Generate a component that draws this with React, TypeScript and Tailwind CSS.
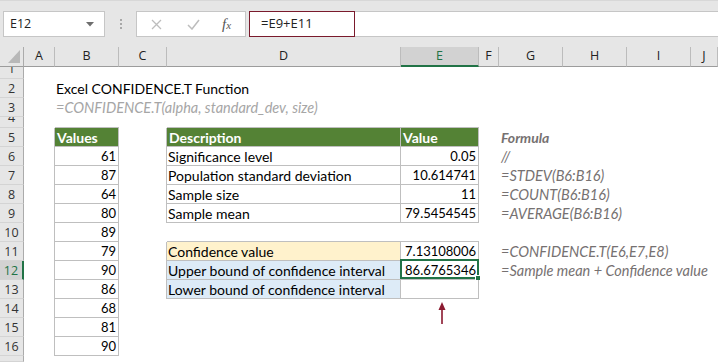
import React from "react";

type Tbl = { r1: number; r2: number; c1: number; c2: number };
const tables: Tbl[] = [
  { r1: 5, r2: 16, c1: 1, c2: 1 },
  { r1: 5, r2: 9, c1: 3, c2: 4 },
  { r1: 11, r2: 13, c1: 3, c2: 4 },
];
const inT = (r: number, c: number) =>
  tables.some((t) => r >= t.r1 && r <= t.r2 && c >= t.c1 && c <= t.c2);

const COLS = ["A", "B", "C", "D", "E", "F", "G", "H", "I", "J"];

type Cell = { t: string; k?: string };
const data: Record<string, Cell> = {
  "2-1": { t: "Excel CONFIDENCE.T Function", k: "title" },
  "3-1": { t: "=CONFIDENCE.T(alpha, standard_dev, size)", k: "syntax" },
  "5-1": { t: "Values", k: "hdr" },
  "5-3": { t: "Description", k: "hdr" },
  "5-4": { t: "Value", k: "hdr" },
  "5-6": { t: "Formula", k: "fhdr" },
  "6-3": { t: "Significance level" },
  "6-4": { t: "0.05", k: "num" },
  "6-6": { t: "//", k: "f" },
  "7-3": { t: "Population standard deviation" },
  "7-4": { t: "10.614741", k: "num" },
  "7-6": { t: "=STDEV(B6:B16)", k: "f" },
  "8-3": { t: "Sample size" },
  "8-4": { t: "11", k: "num" },
  "8-6": { t: "=COUNT(B6:B16)", k: "f" },
  "9-3": { t: "Sample mean" },
  "9-4": { t: "79.5454545", k: "num" },
  "9-6": { t: "=AVERAGE(B6:B16)", k: "f" },
  "11-3": { t: "Confidence value", k: "yellow" },
  "11-4": { t: "7.13108006", k: "num" },
  "11-6": { t: "=CONFIDENCE.T(E6,E7,E8)", k: "f" },
  "12-3": { t: "Upper bound of confidence interval", k: "blue" },
  "12-4": { t: "86.6765346", k: "num" },
  "12-6": { t: "=Sample mean + Confidence value", k: "f" },
  "13-3": { t: "Lower bound of confidence interval", k: "blue" },
  "13-4": { t: "", k: "num" },
};
const vals = [61, 87, 64, 80, 89, 79, 90, 86, 68, 81, 90];
vals.forEach((v, i) => {
  data[`${i + 6}-1`] = { t: String(v), k: "num" };
});

function kindClass(k?: string) {
  switch (k) {
    case "title":
      return "text-[14px] text-black pl-[1px]";
    case "syntax":
      return "text-[14.5px] italic text-[#a6a6a6] pl-[1px]";
    case "hdr":
      return "text-[14px] bg-[#548235] text-white font-bold pl-[2px]";
    case "fhdr":
      return "text-[14px] italic font-bold text-[#767171] pl-[2px]";
    case "f":
      return "text-[14.5px] italic text-[#767171] pl-[2px]";
    case "num":
      return "text-[13px] text-black text-right justify-end pr-[2px]";
    case "yellow":
      return "text-[14px] bg-[#fff2cc] text-black pl-[1px]";
    case "blue":
      return "text-[14px] bg-[#ddebf7] text-black pl-[1px]";
    default:
      return "text-[14px] text-black pl-[1px]";
  }
}

function RowHeader({ r }: { r: number }) {
  const sel = r === 12;
  const align =
    r === 1 || r === 4 ? "items-end" : r === 17 ? "items-start" : "items-center";
  return (
    <div
      className={`flex ${align} justify-center overflow-hidden border-b border-b-[#d4d4d4] ${
        sel
          ? "bg-[#d2d2d2] text-[#217346] border-r-2 border-r-[#217346]"
          : "bg-[#e6e6e6] text-[#333] border-r border-r-[#ababab]"
      }`}
    >
      <span className="block h-[19px] shrink-0 leading-[19px] text-[12.5px] [font-family:'Open_Sans',sans-serif]">
        {r}
      </span>
    </div>
  );
}

function ColHeader({ c }: { c: number }) {
  const sel = c === 4;
  return (
    <div
      className={`flex items-center justify-center text-[12.5px] [font-family:'Open_Sans',sans-serif] border-r border-r-[#bcbcbc] ${
        sel
          ? "bg-[#d2d2d2] text-[#217346] border-b-2 border-b-[#217346]"
          : "bg-[#e6e6e6] text-[#222] border-b border-b-[#9c9c9c]"
      }`}
    >
      {COLS[c]}
    </div>
  );
}

function SheetCell({ r, c }: { r: number; c: number }) {
  const cell = data[`${r}-${c}`];
  const br = inT(r, c) || inT(r, c + 1);
  const bb = inT(r, c) || inT(r + 1, c);
  const isSel = r === 12 && c === 4;
  const isArrow = r === 14 && c === 4;
  return (
    <div
      className={`relative flex items-center whitespace-nowrap leading-[19px] [font-family:Lato,sans-serif] ${
        br ? "border-r border-r-[#bfbfbf]" : ""
      } ${bb ? "border-b border-b-[#bfbfbf]" : ""} ${cell ? kindClass(cell.k) : ""}`}
    >
      {cell ? <span className="w-full">{cell.t}</span> : null}
      {isSel && (
        <div className="pointer-events-none absolute -left-[1px] -top-[2px] -right-[1px] bottom-0 border-2 border-[#217346]">
          <div className="absolute -right-[4px] -bottom-[4px] h-[6px] w-[6px] border border-white bg-[#217346]" />
        </div>
      )}
      {isArrow && (
        <svg
          className="absolute left-[37px] top-[3px]"
          width="8"
          height="22"
          viewBox="0 0 8 22"
        >
          <polygon points="4,0 7.5,8 0.5,8" fill="#8b1a30" />
          <rect x="3.2" y="7" width="1.6" height="15" fill="#8b1a30" />
        </svg>
      )}
    </div>
  );
}

export default function App() {
  const rows = Array.from({ length: 17 }, (_, i) => i + 1);
  return (
    <div className="flex h-[362px] w-[718px] flex-col overflow-hidden bg-white">
      {/* formula bar */}
      <div className="flex h-[47px] shrink-0 items-start border-t border-t-[#d8d8d8] bg-[#e6e6e6] pt-[10px]">
        <div className="ml-[3px] flex h-[26px] w-[102px] items-center border border-[#c6c6c6] bg-white pl-[6px] pr-[10px]">
          <span className="flex-1 text-[12.5px] text-[#222] [font-family:'Open_Sans',sans-serif]">
            E12
          </span>
          <svg width="8" height="5" viewBox="0 0 8 5">
            <polygon points="0,0 8,0 4,4.5" fill="#6e6e6e" />
          </svg>
        </div>
        <div className="ml-[14px] flex h-[26px] w-[3px] flex-col items-center justify-center gap-[2px]">
          <span className="h-[2px] w-[2px] bg-[#a8a8a8]" />
          <span className="h-[2px] w-[2px] bg-[#a8a8a8]" />
          <span className="h-[2px] w-[2px] bg-[#a8a8a8]" />
        </div>
        <div className="ml-[14px] flex h-[26px] w-[110px] items-center border border-[#c6c6c6] bg-white">
          <svg className="ml-[14px]" width="11" height="11" viewBox="0 0 11 11">
            <path d="M1 1 L10 10 M10 1 L1 10" stroke="#bdbdbd" strokeWidth="1.3" />
          </svg>
          <svg className="ml-[25px]" width="13" height="11" viewBox="0 0 13 11">
            <path d="M1 6 L5 10 L12 1" stroke="#bdbdbd" strokeWidth="1.5" fill="none" />
          </svg>
          <span className="ml-[22px] italic text-[15px] leading-none text-[#555] [font-family:'Liberation_Serif',serif]">
            f<span className="text-[11px]">x</span>
          </span>
        </div>
        <div className="ml-[3px] flex h-[26px] flex-1 border-y border-y-[#c6c6c6] bg-white">
          <div className="-my-px flex h-[26px] w-[106px] items-center border border-[#7a1a2c] pl-[11px] text-[13px] text-[#222] [font-family:'Open_Sans',sans-serif]">
            =E9+E11
          </div>
        </div>
      </div>
      {/* grid */}
      <div className="grid flex-1 grid-cols-[24px_31px_64px_48px_234px_78px_20px_64px_64px_64px_1fr] grid-rows-[20px_12px_19px_19px_11px_repeat(12,19px)_1fr] overflow-hidden">
        <div className="relative border-r border-b border-r-[#ababab] border-b-[#9c9c9c] bg-[#e6e6e6]">
          <svg className="absolute left-[8px] top-[3px]" width="13" height="14" viewBox="0 0 13 14">
            <polygon points="12,0 12,13 0,13" fill="#b8b8b8" />
          </svg>
        </div>
        {COLS.map((_, c) => (
          <ColHeader key={c} c={c} />
        ))}
        {rows.map((r) => (
          <React.Fragment key={r}>
            <RowHeader r={r} />
            {COLS.map((_, c) => (
              <SheetCell key={c} r={r} c={c} />
            ))}
          </React.Fragment>
        ))}
      </div>
    </div>
  );
}
